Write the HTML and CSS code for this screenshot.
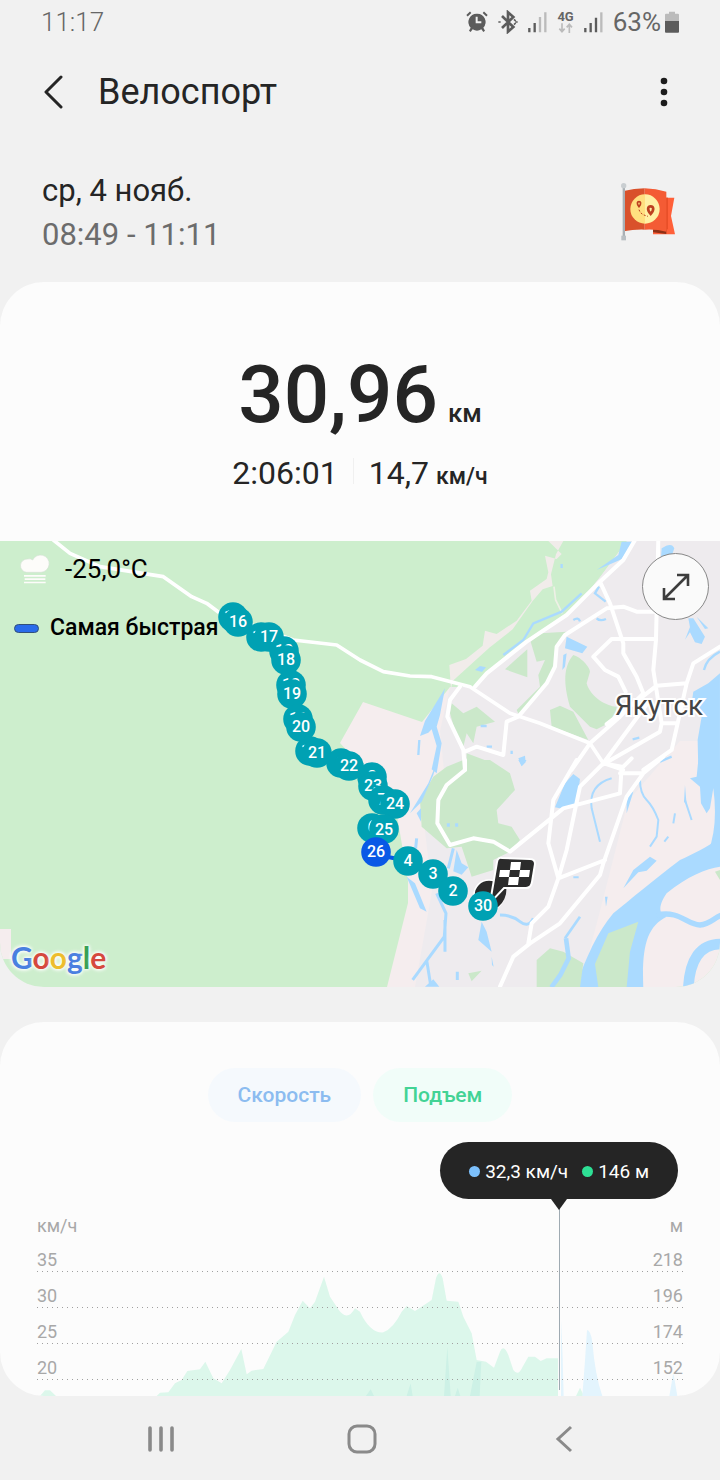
FILE: index.html
```html
<!DOCTYPE html>
<html lang="ru">
<head>
<meta charset="utf-8">
<meta name="viewport" content="width=device-width, initial-scale=1">
<title>Велоспорт</title>
<link rel="stylesheet" href="styles.css">
</head>
<body>
<header class="status">
  <span class="clock">11:17</span>
  <div class="status-icons">
    <svg width="22" height="22" viewBox="0 0 66 66" fill="#5c5c5c" aria-label="Будильник"><path d="M33 8a25 25 0 0 1 19 42l5 9-5 4-6-8a25 25 0 0 1-26 0l-6 8-5-4 5-9A25 25 0 0 1 33 8Z"/><path d="M3 14 14 4M52 4l11 10" stroke="#5c5c5c" stroke-width="6"/><path d="M32 17v17h14" fill="none" stroke="#f1f1f1" stroke-width="6"/></svg>
    <svg class="bt" width="20" height="24" viewBox="0 0 60 72" fill="none" stroke="#5c5c5c" stroke-width="8" aria-label="Bluetooth"><path d="m12 18 34 33-16 14V7l16 14-34 33"/><path d="M1 36h7M52 36h7M48 28l5 5M53 39l-5 5" stroke-width="5"/></svg>
    <svg width="19" height="22" viewBox="0 0 57 66" aria-label="Сигнал"><path d="M4 64V51M20 64V36" stroke="#5c5c5c" stroke-width="7"/><path d="M36 64V18M52 64V4" stroke="#bbb" stroke-width="7"/></svg>
    <div class="net"><span>4G</span><svg width="15" height="10" viewBox="0 0 45 30" fill="none" stroke="#bbb" stroke-width="5"><path d="M12 1v25M4 17l8 9 8-9M34 30V4M26 13l8-9 8 9"/></svg></div>
    <svg width="19" height="22" viewBox="0 0 57 66" aria-label="Сигнал"><path d="M4 64V51M20 64V36M36 64V20" stroke="#5c5c5c" stroke-width="7"/><path d="M52 64V4" stroke="#bbb" stroke-width="7"/></svg>
    <span class="percent">63%</span>
    <svg width="14" height="22" viewBox="0 0 42 66" aria-label="Батарея"><path d="M3 8h9V2h18v6h9q3 0 3 3v21H0V11q0-3 3-3Z" fill="#bbb"/><path d="M0 30h42v32q0 3-3 3H3q-3 0-3-3Z" fill="#5c5c5c"/></svg>
  </div>
</header>

<div class="toolbar">
  <button class="icon-btn back" aria-label="Назад"><svg width="20" height="34" viewBox="0 0 20 34" fill="none" stroke="#252525" stroke-width="3" stroke-linecap="round" stroke-linejoin="round"><path d="M17 2 2 17l15 15"/></svg></button>
  <h1>Велоспорт</h1>
  <button class="icon-btn more" aria-label="Ещё"><svg width="8" height="30" viewBox="0 0 8 30" fill="#1c1c1c"><circle cx="4" cy="4" r="3.3"/><circle cx="4" cy="15" r="3.3"/><circle cx="4" cy="26" r="3.3"/></svg></button>
</div>

<section class="session">
  <div>
    <p class="date">ср, 4 нояб.</p>
    <p class="hours">08:49 - 11:11</p>
  </div>
  <svg class="flag" width="56" height="60" viewBox="0 0 168 180" aria-label="Флаг">
    <path d="M135 44h31l-10 55 12 55H102v-15h33Z" fill="#ff6039"/><path d="M102 139h40v14l-40-5Z" fill="#8f3015"/><path d="M135 44h12v95h-12Z" fill="#e94f28"/>
    <path d="M14 24Q45 17 77 16v124Q44 139 14 145Z" fill="#d9512b"/><path d="M77 16q34 1 65 10v120q-30-8-65-6Z" fill="#f45b34"/>
    <path d="M78 34a44 44 0 0 0 0 88Z" fill="#ffdf80"/><path d="M78 34a44 44 0 0 1 0 88Z" fill="#fff0a4"/>
    <path d="M11 8h7v162h-7Z" fill="#a9b0b5"/><circle cx="14" cy="8" r="8" fill="#c9ced1"/><path d="M7 158h14v14H7Z" fill="#b9bfc3"/>
    <g fill="none" stroke="#bd4020"><path stroke-width="5" d="M60 71c-8-10-5-15 0-15s8 5 0 15Z"/><path stroke-width="8" d="M95 93c-13-16-7-23 0-23s13 7 0 23Z"/><path stroke-width="3" stroke-dasharray="6 5" d="M60 80c4 12 12 16 27 20"/></g>
  </svg>
</section>

<main>
<section class="summary">
  <p class="distance"><span class="digits">30,96</span><span class="unit">км</span></p>
  <p class="pace"><span>2:06:01</span><i class="split"></i><span>14,7</span><small>км/ч</small></p>
</section>

<section class="map">
  <svg class="map-canvas" viewBox="0 0 720 446" preserveAspectRatio="xMidYMid slice" aria-label="Карта маршрута">
    <defs>
      <g id="pin"><circle r="14.8"/></g>
    </defs>
    <rect width="720" height="446" fill="#cdeecd"/>
    <path fill="#f5edee" d="M627 0 600 36 573 69 503 112 475 146 450 146 422 181 363 161 340 202 395 262 408 340 408 362 387 446H720V0Z"/>
    <path fill="#f5edee" d="M0 388h11v30H0Z"/>
    <path fill="#eeebee" d="M627 0 600 36 573 69 503 112 475 146 450 146 440 190 444 230 425 290 432 350 415 446H580L600 370 628 260 680 200H720V0Z"/>
    <g transform="translate(360 -1) scale(.3333)">
      <g fill="#cbe8ca">
        <path d="M640 210 600 240 440 345 345 440 270 437 300 400 420 300 500 190 575 140 590 3H800L720 110Z" fill="#cdeecd"/>
        <path fill="#f1ecea" d="M565 3h45l-22 40-15 60 5 35-30 10-30 35-60 85-70 55-110 100-5 25-5-73 50-18 50-40 7-45 35 10 60-40 45-60-5-30 50-35 5-20-10-50 35 10 15-15Z"/>
        <path d="M502 328v84l-67-24Z"/><path d="m512 305 30-25 78-5-35 55-5 72-100 128-10-20 70-70-5-35 20-45-25 5Z"/>
        <path d="M640 345c20 5 50 35 50 50l-10 35c10 40 60 70 90 70l-5 40-55 28-20-8-60-60c-20-70-20-120 10-155Z"/>
        <path d="m600 497 40 18 45 85-110-40-5-50ZM275 490l35 30 40-20 55 45-55 15-10 50-20-30-10 40-20-30-20-70ZM320 640l80 30 30 25H320Z"/>
      </g>
      <path d="m582 140 5 40 20 40" stroke="#eef0e6" stroke-width="5" fill="none"/>
      <g fill="#aadaff">
        <path d="m785 5-10 40-65 45 75-32 35-53ZM905 25q30-20 38 0l-10 30h-30ZM620 290l62 30-15 20-52-15ZM610 345l10-5-5 40-8 10ZM345 390l15-12 18 4-12 14ZM985 235h15l35 55-10 22-20-5-15-30-15 22 15-38ZM1010 230l35 35-10 2ZM475 655l20-8 2 20-12 12ZM255 445l-15 80-10 35 15 50-15 90-15-12 15-70-15-50-10 10-25 10 15-45Z"/>
        <path d="m1000 455 45-25 35-30v290h-65l-2-90 12-70-30-40Z"/>
      </g>
      <path fill="none" stroke="#aadaff" stroke-width="7" d="m430 345 60-45 30-50 85-35 60-55M717 140l-12 20 32 25M640 240q15-10 20 4M710 235q10 10 28 2M1080 335q-40 20-48 55M178 600l-3 45M362 558h18M380 620h16M455 632v10M818 598l20-5M900 665l35-15M605 72v12"/>
    </g>
    <g transform="translate(200 219) scale(.3333)">
      <path fill="#cbe8ca" d="M700 50 740 20 790 0h80l60 40 15 50-55 60 5 40 40 10 25 40-30 35-50 25v30l-65 20-30-90-45 5-75-65-5-80ZM805 640l40-8-30 32Z"/>
      <g fill="#aadaff"><path d="m715-5-15 50-35 80-35 35 55-90ZM620 350l25 20 35 85-20-10ZM845 485l15 30 15 60-40-35ZM770 270l15 40 20 12-20 22-25-10ZM955 0h25l-15 18ZM875 590l6 30-5-5ZM675 680l25-22 18 22ZM650 160l13-15v40Z"/></g>
      <path fill="none" stroke="#aadaff" stroke-width="9" d="m710 400 28 60-5 70-55 75-40 55M735 480v95M680 600l12 75M900 465q35 0 60 20t40-10M760 265l-15 60M772 635v25M650 235l-3 30M745 190v10M770 190v10"/>
    </g>
    <g transform="translate(480 219) scale(.3333)">
      <g fill="#aadaff">
        <path d="M655 0h65v245L685 275q30-80 15-190l-10 60-10 15-17-30-3-50-30-25 20-5Z"/>
        <path d="M720 230C680 265 640 280 600 300 520 360 450 420 400 460 350 520 320 590 285 685h205C485 560 500 500 560 470 530 460 540 430 560 400 620 350 680 325 720 320Z"/>
        <path d="m255 70 25-28 20 15-10 75-40 15-25-5ZM120 0h18l-10 15ZM440 105l20-10-20 65ZM430 385l30-55 50-40 20 12-30 30-25 5ZM615 75l5 60-8-10ZM375 410h8l-5 30Z"/>
      </g>
      <g fill="none" stroke="#aadaff">
        <path stroke-width="16" d="M530 465c70-15 90 30 130 30 30-2 40-20 65-30"/><path stroke-width="32" d="M625 682C630 600 660 550 725 552"/><path stroke-width="8" d="m300 470-45 65"/><path stroke-width="6" d="M395 55q-70 20-60 90l25 100M480 60q0 40 20 60t35 60l-5 50-20 30M585 160l-5 30M615 120l20 60M565 230l-12 15M280 352h16"/>
      </g>
      <path fill="#cbe8ca" d="m385 520 90-35-25 90-10 107h-85l-10-70ZM170 600l40-35 40 10 60 35-10 72H170ZM705 335l15-5v30Z"/>
      <path fill="none" stroke="#aadaff" stroke-width="14" d="m258 535 8 60-25 50-27 37"/>
    </g>
    <g fill="none" stroke="#fff" stroke-linejoin="round" stroke-linecap="round" transform="translate(360 -1) scale(.3333)">
      <path stroke-width="11" d="m-920 0 50 40 90 40 190 30 85 60 45 20 40 30 220 80 130 15L0 360l70 35 80 13 65 2 115 30 120 80 90 30 150 60 40 60 60 20"/>
      <path stroke-width="12" d="m345 440 35-40 120-95 120-80 100-100 70-65L825 0M720 125l30 65 40 120v30l40 70 20 50M475 530l85-100 25-50 5-60 25-35 125-80 50-5 40 15h60M895 0l-7 300-8 90 25 160-5 25-170 98M880 297H755l-55 53 35 40 40 20 22 45M300 440l-30 40-8 50 48 100 5 60M315 635l35-15 80 25 10-100 35-15M1080 320l-80 50-20 60-90 7-45 35-105 80M850 460l-70 70-90 80-55 80M980 430l-45 200-85 60M870 480l-140 190M905 550h45"/>
    </g>
    <g fill="none" stroke="#fff" stroke-width="12" stroke-linejoin="round" stroke-linecap="round" transform="translate(480 219) scale(.3333)">
      <path d="M-45 0v30l-55 45-25 45-3 70 38 65 70-20 60 10 50 30 160-130 170-45 5-80-55-10-70 70-15 70-25 120-25 85M290 0l-70 120-15 130 30 105-30 85-50 50-10 60M235 355l140-55M420 40h70M430 20l25-25M550-10l-60 50-50 70-70 200-10 35-120 145-90 60-50 40-40 90"/>
    </g>

    <text class="city" x="659" y="174">Якутск</text>

    <path d="m388 316 20 4" stroke="#0958e6" stroke-width="4" fill="none"/>
    <g class="bubble"><circle cx="489" cy="354" r="15" fill="#2b2b2b" stroke="#fff" stroke-width="1.5"/><ellipse cx="498" cy="355" rx="7" ry="13" transform="rotate(25 498 355)" fill="#2b2b2b"/><path d="m502 317 28 1q5 0 5 5l-3 18q-1 6-6 6h-22l-14 15 7-41q1-5 5-4Z" fill="#2b2b2b" stroke="#fff" stroke-width="2"/><path fill="#fff" d="M511 321h10l-1 8h-10ZM500 329h10l-1 7h-10ZM520 329h10l-1 7h-10ZM509 336h10l-1 8h-10Z"/></g>
    <g class="pins">
      <use href="#pin" x="233" y="76"/><text x="233" y="81">15</text><use href="#pin" x="238" y="81"/><text x="238" y="86">16</text>
      <use href="#pin" x="261" y="96"/><text x="261" y="101">14</text><use href="#pin" x="269" y="96"/><text x="269" y="101">17</text>
      <use href="#pin" x="284" y="110"/><text x="284" y="115">13</text><use href="#pin" x="286" y="119"/><text x="286" y="124">18</text>
      <use href="#pin" x="291" y="144"/><text x="291" y="149">12</text><use href="#pin" x="292" y="153"/><text x="292" y="158">19</text>
      <use href="#pin" x="298" y="178"/><text x="298" y="183">11</text><use href="#pin" x="301" y="186"/><text x="301" y="191">20</text>
      <use href="#pin" x="310" y="210"/><text x="310" y="215">10</text><use href="#pin" x="317" y="212"/><text x="317" y="217">21</text>
      <use href="#pin" x="341" y="222"/><text x="341" y="227">9</text><use href="#pin" x="349" y="225"/><text x="349" y="230">22</text>
      <use href="#pin" x="372" y="236"/><text x="372" y="241">8</text><use href="#pin" x="373" y="245"/><text x="373" y="250">23</text>
      <use href="#pin" x="383" y="259"/><text x="382" y="264">7</text><use href="#pin" x="395" y="263"/><text x="395" y="268">24</text>
      <use href="#pin" x="372" y="287"/><text x="372" y="291">6</text><use href="#pin" x="384" y="288"/><text x="384" y="294">25</text>
      <use href="#pin" class="fast" x="376" y="311"/><text x="376" y="316">26</text>
      <use href="#pin" x="408" y="320"/><text x="408" y="325">4</text><use href="#pin" x="433" y="333"/><text x="433" y="338">3</text>
      <use href="#pin" x="453" y="350"/><text x="453" y="355">2</text><use href="#pin" x="483" y="365"/><text x="483" y="370">30</text>
    </g>
  </svg>
  <div class="weather">
    <svg width="30" height="32" viewBox="0 0 90 96" fill="#fdfcfa" aria-label="Туман"><path d="M20 58a20 20 0 0 1 3-40 16 16 0 0 1 15 3 26 26 0 1 1 25 37Z" stroke="#d5e2d4" stroke-width="2"/><path d="M12 66h65v5H12ZM14 76h62v5H14ZM12 86h65v5H12Z"/></svg>
    <span>-25,0°C</span>
  </div>
  <div class="legend"><i class="swatch"></i><span>Самая быстрая</span></div>
  <button class="expand" aria-label="Развернуть карту"><svg width="28" height="28" viewBox="0 0 28 28" fill="none" stroke="#3d3d3d" stroke-width="2.6"><path d="M2 26 26 2M15 2h11v11M2 15v11h11"/></svg></button>
  <p class="brand"><span class="b">G</span><span class="r">o</span><span class="y">o</span><span class="b">g</span><span class="g">l</span><span class="r">e</span></p>
</section>

<section class="stats">
  <div class="tabs">
    <button class="tab speed">Скорость</button>
    <button class="tab climb">Подъем</button>
  </div>
  <div class="chart">
    <svg class="plot" viewBox="0 0 2160 588" preserveAspectRatio="none" aria-hidden="true">
      <path fill="#dcf7eb" d="m470 588 10-10 25-1 20-27 20-10 17-27 38-5 16-23 24 50 25 15 25-40 34-63 16 76 15-11 35-5 40-82 35-30 20-50 23-43 22 23 15-20 27-75 18 60 20 30q30 50 55 5l15 10q30 65 70 62 30-12 55-62l15-17 25 15 50-33 13-65q10-30 20 0l12 67 35 3 15 45 25 50 15 80 28 5 24 18 18-48q11-25 25 10l15 45q15 20 28-10l17-30h20l17 13 18-8h34v113ZM120 588l15-17h15l18 17ZM1728 588l12-25 12 25Z"/>
      <path fill="#cdf1e6" d="m1332 588 10-148 10 148ZM1410 588l20-103h14l-5 103ZM1220 588l12-38 6 38ZM1098 588l14-20 10 20ZM1365 588l8-25 8 25Z"/>
      <path fill="#e3f4fd" d="M1747 588q8-100 14-198 10 0 16 35 8 100 30 163ZM2008 588l12-70 12 70ZM1683 588V360q6 110 8 228Z"/>
    </svg>
    <div class="tick units"><span>км/ч</span><span>м</span></div>
    <div class="tick"><span>35</span><span>218</span></div>
    <div class="tick"><span>30</span><span>196</span></div>
    <div class="tick"><span>25</span><span>174</span></div>
    <div class="tick"><span>20</span><span>152</span></div>
    <i class="cursor"></i>
    <div class="tooltip"><i class="dot blue"></i><span>32,3 км/ч</span><i class="dot green"></i><span>146 м</span></div>
  </div>
</section>
</main>

<nav class="navbar">
  <button class="icon-btn" aria-label="Недавние"><svg width="28" height="28" viewBox="0 0 28 28" stroke="#8a8a8a" stroke-width="3.6" stroke-linecap="round"><path d="M3 3v22M14 3v22M25 3v22"/></svg></button>
  <button class="icon-btn" aria-label="Домой"><svg width="30" height="30" viewBox="0 0 30 30" fill="none" stroke="#8a8a8a" stroke-width="3"><rect x="2" y="2" width="26" height="26" rx="8"/></svg></button>
  <button class="icon-btn" aria-label="Назад"><svg width="18" height="28" viewBox="0 0 18 28" fill="none" stroke="#8a8a8a" stroke-width="3"><path d="M16 2 3 14l13 12"/></svg></button>
</nav>
</body>
</html>
```
FILE: styles.css
```css
* { box-sizing: border-box; }
body { margin: 0; min-height: 100vh; display: flex; flex-direction: column; background: #f1f1f1; color: #252525; font-family: Roboto, "Noto Sans", sans-serif; }
p, h1 { margin: 0; font-weight: 400; }
button { border: 0; padding: 0; background: none; font: inherit; color: inherit; }
svg { display: block; flex: none; }
.icon-btn { display: flex; align-items: center; justify-content: center; }

.status { display: flex; justify-content: space-between; align-items: center; height: 44px; padding: 0 41px; color: #666; font-size: 26px; }
.status-icons { display: flex; align-items: center; gap: 10px; }
.clock { font-weight: 300; }
.net { display: flex; flex-direction: column; align-items: center; font-size: 13px; line-height: 12px; font-weight: 700; }
.percent { margin-right: -6px; }

.toolbar { display: flex; align-items: center; height: 96px; padding: 0 52px 0 44px; }
.toolbar h1 { flex: 1; margin-left: 34px; font-size: 36px; line-height: 48px; }

.session { display: flex; justify-content: space-between; align-items: center; height: 142px; padding: 3px 45px 0 42px; }
.session .date { font-size: 31px; line-height: 44px; }
.session .hours { font-size: 31px; line-height: 44px; color: #6c6c6c; }

.summary { padding: 65px 0 40px; border-radius: 44px 44px 0 0; background: #fcfcfc; }
.distance { display: flex; justify-content: center; align-items: baseline; gap: 10px; margin-bottom: 3px; font-weight: 500; }
.digits { font-size: 80px; line-height: 96px; }
.unit { font-size: 26px; line-height: 30px; }
.pace { display: flex; justify-content: center; align-items: baseline; font-size: 32px; line-height: 55px; }
.split { width: 1px; height: 26px; margin: 0 15px; background: #f0f0f0; }
.pace small { margin-left: 7px; font-size: 23px; line-height: 30px; font-weight: 500; }

.map { position: relative; overflow: hidden; border-radius: 0 0 44px 44px; color: #000; }
.map-canvas { width: 100%; height: auto; }
.city { fill: #444; stroke: #fff; stroke-width: 4px; paint-order: stroke; font-size: 28px; text-anchor: middle; }
.pins { fill: #00a1b3; }
.pins .fast { fill: #0958e6; }
.pins text { fill: #fff; font-size: 16px; font-weight: 500; text-anchor: middle; }
.weather { position: absolute; top: 12px; left: 20px; display: flex; align-items: center; gap: 15px; font-size: 26px; line-height: 32px; }
.legend { position: absolute; top: 71px; left: 14px; display: flex; align-items: center; gap: 11px; font-size: 23px; line-height: 32px; font-weight: 500; }
.swatch { width: 25px; height: 9px; border: 1px solid #33507a; border-radius: 5px; background: #2a6bea; }
.expand { position: absolute; top: 12px; right: 11px; width: 67px; height: 67px; border: 1px solid #888; border-radius: 50%; background: #fafafa; display: flex; align-items: center; justify-content: center; }
.brand { position: absolute; left: 11px; bottom: 10px; font-family: Lato, sans-serif; font-size: 30px; line-height: 40px; font-weight: 700; text-shadow: 0 0 3px #fff, 0 0 4px #fff, 0 0 5px #fff; }
.brand .b { color: #4a80e0; }
.brand .r { color: #d5493e; }
.brand .y { color: #edbd2c; }
.brand .g { color: #38a055; }

.stats { margin-top: 35px; padding-top: 46px; overflow: hidden; border-radius: 44px; background: #fcfcfc; }
.tabs { display: flex; justify-content: center; gap: 12px; }
.tab { height: 54px; padding: 0 30px; border-radius: 27px; font-size: 21px; font-weight: 500; }
.speed { background: #f5f9fd; color: #8cbcf0; }
.climb { background: #f1fdf9; color: #43d395; }
.chart { position: relative; padding: 94px 37px 16px; color: #a8a8a8; font-size: 18px; }
.plot { position: absolute; left: 0; bottom: 0; width: 100%; height: 196px; }
.tick { position: relative; display: flex; justify-content: space-between; height: 36px; padding-top: 14px; line-height: 20px; background: repeating-linear-gradient(90deg, #a0a0a0 0 1px, transparent 1px 5px) bottom / 100% 1px no-repeat; }
.units { height: 20px; padding-top: 0; background: none; }
.cursor { position: absolute; top: 77px; bottom: 6px; left: 77.7%; width: 1px; background: #9faab2; }
.tooltip { position: absolute; top: 20px; right: 42px; display: flex; align-items: center; height: 57px; padding: 2px 29px 0; border-radius: 29px; background: #252525; color: #fff; font-size: 19px; white-space: nowrap; }
.tooltip::after { content: ""; position: absolute; top: 100%; left: 50%; margin-left: -8px; border: 8px solid transparent; border-top: 11px solid #252525; border-bottom: 0; }
.dot { width: 11px; height: 11px; margin-right: 5px; border-radius: 50%; }
.blue { background: #7cc0fc; }
.green { margin-left: 14px; background: #2ee095; }

.navbar { display: grid; grid-template-columns: repeat(3, 1fr); height: 84px; margin-top: auto; padding: 2px 55px 0 60px; }
```
